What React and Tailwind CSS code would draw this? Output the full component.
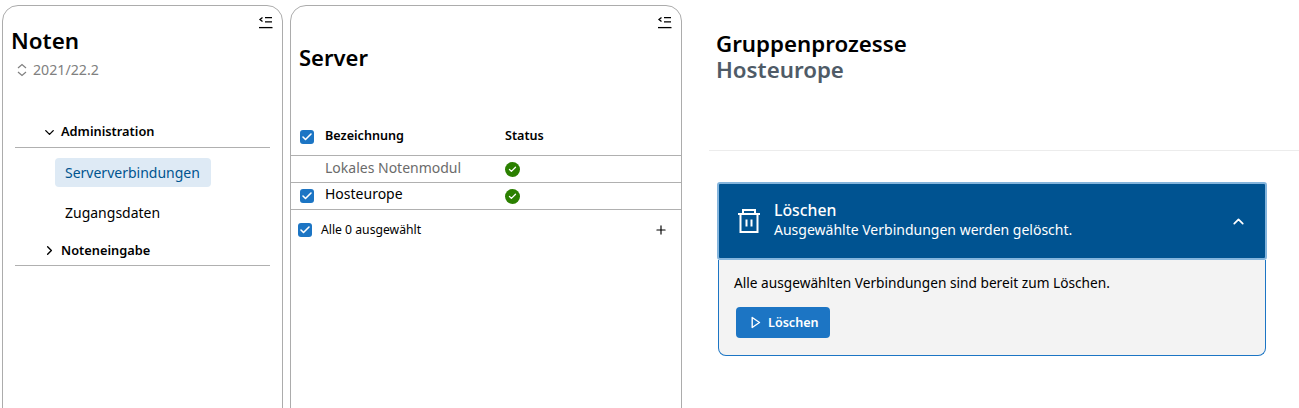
import React from 'react';
import { Check, ChevronDown, ChevronRight, ChevronUp, Plus } from 'lucide-react';

const CollapseIcon = () => (
    <svg width="15" height="13" viewBox="0 0 15 13" fill="none" stroke="currentColor" strokeWidth="1.3">
        <path d="M4.5 1.5 2 3.5l2.5 2" />
        <path d="M7 1.7h7M7 5.8h7" />
        <path d="M1 11.6h13.5" />
    </svg>
);

const TrashIcon = () => (
    <svg width="24" height="26" viewBox="0 0 24 26" fill="none" stroke="currentColor" strokeWidth="2">
        <path d="M1 6h22M6 6V2h12v4" />
        <path d="M3.5 6v18h17V6" />
        <path d="M9.5 11.5v7M14.5 11.5v7" />
    </svg>
);

const PlayIcon = () => (
    <svg width="10" height="13" viewBox="0 0 10 13" fill="none" stroke="currentColor" strokeWidth="1.4">
        <path d="M1.2 1.5v10L8.5 6.5z" strokeLinejoin="round" />
    </svg>
);

const Checkbox = () => (
    <span className="flex h-[14px] w-[14px] shrink-0 items-center justify-center rounded-[3px] bg-[#1c75c4] text-white">
        <Check size={12} strokeWidth={3.2} />
    </span>
);

const StatusOk = () => (
    <span className="flex h-[15px] w-[15px] items-center justify-center rounded-full bg-[#2b8000] text-white">
        <Check size={9} strokeWidth={3.5} />
    </span>
);

const NavGroup = ({ open, label }) => (
    <div className="flex h-[27px] items-center border-b border-[#b0b0b0] pb-[4px]">
        <span className="flex w-[46px] justify-end pr-[4px]">
            {open ? <ChevronDown size={15} strokeWidth={2.2} /> : <ChevronRight size={15} strokeWidth={2.2} />}
        </span>
        <span className="text-[12.8px] font-semibold">{label}</span>
    </div>
);

const App = () => {
    return (
        <div className="flex h-[408px] overflow-hidden bg-white pl-[2px] pt-[5px] font-['Noto_Sans',sans-serif] text-black">
            {/* Noten */}
            <div className="h-[440px] w-[281px] shrink-0 rounded-2xl border border-[#acacac]">
                <div className="flex justify-end pr-[9px] pt-[10px] text-black"><CollapseIcon /></div>
                <h1 className="ml-[8px] mt-[-3px] text-[22.4px] leading-[30px] font-semibold">Noten</h1>
                <div className="ml-[13px] mt-[5px] flex items-center gap-[5px] text-[14.2px] leading-[18px] text-[#808080]">
                    <svg width="12" height="14" viewBox="0 0 12 14" fill="none" stroke="currentColor" strokeWidth="1.2">
                        <path d="M2 5l4-3.5L10 5M2 9l4 3.5L10 9" />
                    </svg>
                    2021/22.2
                </div>
                <div className="mx-[12px] mt-[42px]">
                    <NavGroup open label="Administration" />
                    <div className="ml-[40px] mt-[10px] flex h-[29px] w-[156px] items-center rounded-[4px] bg-[#deeaf5] pb-[1px] pl-[10px] text-[14px] text-[#00548f]">
                        Serververbindungen
                    </div>
                    <div className="ml-[50px] mt-[11px] flex h-[29px] items-center text-[14px]">Zugangsdaten</div>
                    <div className="mt-[13px]">
                        <div className="flex h-[26px] items-center border-b border-[#b0b0b0] pb-[4px]">
                            <span className="flex w-[46px] justify-end pr-[4px]"><ChevronRight size={15} strokeWidth={2.2} /></span>
                            <span className="text-[12.8px] font-semibold">Noteneingabe</span>
                        </div>
                    </div>
                </div>
            </div>

            {/* Server */}
            <div className="ml-[7px] h-[440px] w-[392px] shrink-0 rounded-2xl border border-[#acacac]">
                <div className="flex justify-end pr-[9px] pt-[10px]"><CollapseIcon /></div>
                <h2 className="ml-[8px] mt-[13px] text-[22px] leading-[30px] font-semibold">Server</h2>
                <div className="mt-[48px] flex h-[36px] items-center border-b border-[#b0b0b0] pb-[2px] text-[12.6px] font-semibold">
                    <span className="ml-[9px] w-[25px]"><Checkbox /></span>
                    <span className="w-[180px]">Bezeichnung</span>
                    <span>Status</span>
                </div>
                <div className="flex h-[27px] items-center border-b border-[#b0b0b0] text-[14px] text-[#6b6b6b]">
                    <span className="ml-[34px] w-[180px] pb-[3px]">Lokales Notenmodul</span>
                    <StatusOk />
                </div>
                <div className="flex h-[27px] items-center border-b border-[#b0b0b0] text-[14px]">
                    <span className="ml-[9px] w-[25px]"><Checkbox /></span>
                    <span className="w-[180px] pb-[5px]">Hosteurope</span>
                    <StatusOk />
                </div>
                <div className="flex h-[39px] items-center pl-[7px] pr-[13px] text-[12.2px]">
                    <Checkbox />
                    <span className="ml-[9px] flex-1 pt-[1px]">Alle 0 ausgewählt</span>
                    <Plus size={14} strokeWidth={2} />
                </div>
            </div>

            {/* Gruppenprozesse */}
            <div className="ml-[27px] flex-1">
                <div className="h-[146px] border-b border-[#ececec] pl-[7px] pt-[26px]">
                    <h2 className="text-[22.3px] leading-[26px] font-semibold">Gruppenprozesse</h2>
                    <h3 className="text-[22.3px] leading-[26px] font-semibold text-[#4f5b67]">Hosteurope</h3>
                </div>
                <div className="ml-[8px] mr-[32px] mt-[31px]">
                    <div className="flex h-[78px] items-center rounded-[3px] border-2 border-[#84b5dd] bg-[#005391] pl-[18px] pr-[18px] text-white">
                        <TrashIcon />
                        <div className="ml-[13px] flex-1">
                            <div className="mt-[-2px] text-[15.8px] leading-[20px] font-medium">Löschen</div>
                            <div className="text-[14px] leading-[20px]">Ausgewählte Verbindungen werden gelöscht.</div>
                        </div>
                        <ChevronUp size={17} strokeWidth={2.4} />
                    </div>
                    <div className="mx-[1px] h-[96px] rounded-b-lg border border-t-0 border-[#1c75c4] bg-[#f3f3f3] pl-[15px] pt-[13px]">
                        <p className="text-[13.7px] leading-[20px]">Alle ausgewählten Verbindungen sind bereit zum Löschen.</p>
                        <button className="ml-[2px] mt-[14px] flex h-[31px] w-[94px] items-center rounded-[4px] bg-[#1c75c4] pl-[15px] text-[12.6px] font-semibold text-white">
                            <PlayIcon />
                            <span className="ml-[7px] pt-[2px]">Löschen</span>
                        </button>
                    </div>
                </div>
            </div>
        </div>
    );
};

export default App;
